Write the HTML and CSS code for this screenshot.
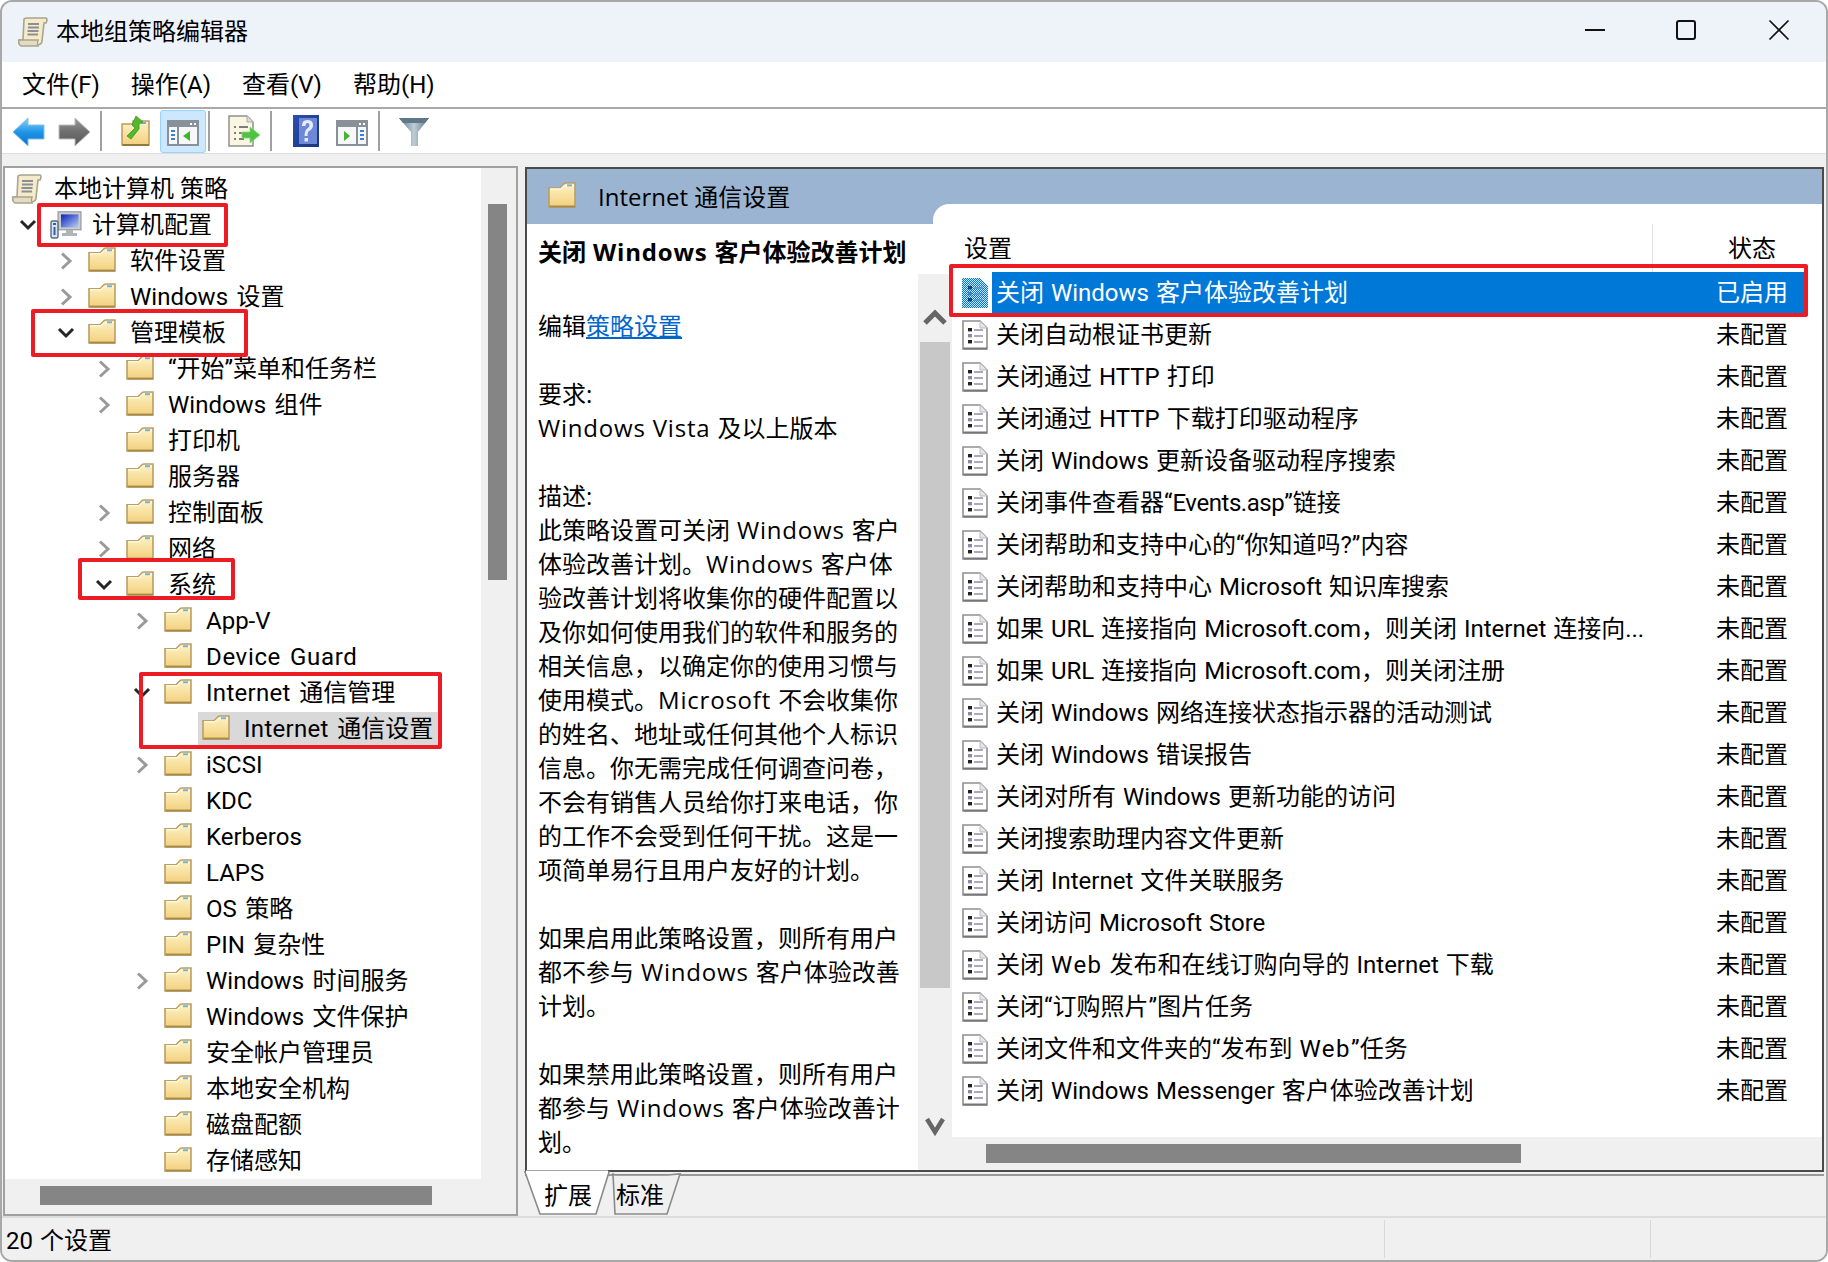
FILE: index.html
```html
<!DOCTYPE html>
<html lang="zh-CN">
<head>
<meta charset="utf-8">
<title>本地组策略编辑器</title>
<link rel="stylesheet" href="styles.css">
</head>
<body>
<svg class="defs" xmlns="http://www.w3.org/2000/svg">
  <defs>
    <linearGradient id="gf" x1="0" y1="0" x2="0" y2="1"><stop offset="0" stop-color="#fdf3c8"/><stop offset="1" stop-color="#f3d07c"/></linearGradient>
    <linearGradient id="gb" x1="0" y1="0" x2="0" y2="1"><stop offset="0" stop-color="#8fd0f8"/><stop offset=".5" stop-color="#1e96e8"/><stop offset="1" stop-color="#0f6cc8"/></linearGradient>
    <linearGradient id="gg" x1="0" y1="0" x2="0" y2="1"><stop offset="0" stop-color="#9a9a9a"/><stop offset=".5" stop-color="#6e6e6e"/><stop offset="1" stop-color="#5a5a5a"/></linearGradient>
    <linearGradient id="gs" x1="0" y1="0" x2="1" y2="1"><stop offset="0" stop-color="#0a1fb8"/><stop offset="1" stop-color="#b8d0f5"/></linearGradient>
    <linearGradient id="gh" x1="0" y1="0" x2="1" y2="1"><stop offset="0" stop-color="#2a4fb0"/><stop offset="1" stop-color="#1a357f"/></linearGradient>
    <linearGradient id="gt" x1="0" y1="0" x2="1" y2="0"><stop offset="0" stop-color="#5f7888"/><stop offset=".5" stop-color="#bccdd6"/><stop offset="1" stop-color="#5a7080"/></linearGradient>
    <pattern id="dither" width="2" height="2" patternUnits="userSpaceOnUse"><rect width="2" height="2" fill="#0078d7"/><rect width="1" height="1" fill="#cfe4f5"/><rect x="1" y="1" width="1" height="1" fill="#cfe4f5"/></pattern>
  </defs>
  <symbol id="folder" viewBox="0 0 28 26" preserveAspectRatio="none">
    <path d="M1 6 L12 6 L15 3 Q16 1 18 1 H27 V25 H1Z" fill="url(#gf)" stroke="#bb9f63" stroke-width="1.6"/>
    <path d="M1.5 24.5 H27" stroke="#a5894d" stroke-width="2"/>
    <path d="M2 7 H13 L16 4 H26" fill="none" stroke="#fff8dc" stroke-width="1.4"/>
    <rect x="19" y="2.4" width="5" height="2" fill="#6ab1e8"/>
  </symbol>
  <symbol id="scroll" viewBox="0 0 30 30">
    <path d="M6 2 Q7 1 10 1 H28 Q30 2 28 6 H26 L24 24 Q24 27 20 28 H3 Q0 27 1 23 H5Z" fill="#f5ebc8" stroke="#a8a48f" stroke-width="1.6"/>
    <path d="M1 23 H20 Q19 27 20 29 H3 Q0 27 1 23Z" fill="#e4dcc0" stroke="#a8a48f" stroke-width="1.4"/>
    <path d="M10 7 H21 M10 10.500 H21 M9.500 14 H20.500 M9.500 17.500 H20" stroke="#8b8f98" stroke-width="2"/>
  </symbol>
  <symbol id="computer" viewBox="0 0 32 28">
    <rect x="8" y="0.8" width="23" height="18" fill="#c8ccd0" stroke="#8a8e92"/>
    <rect x="11" y="3.4" width="17.5" height="13" fill="url(#gs)"/>
    <path d="M16 19 H23 V22 H27 V25 H12 V22 H16Z" fill="#b0b4b8"/>
    <rect x="1" y="10" width="7" height="17" rx="1.5" fill="#d8e4f0" stroke="#5a6a80" stroke-width="1.4"/>
    <path d="M3 13 H6 M4.5 16 V24" stroke="#3560a8" stroke-width="2"/>
  </symbol>
  <symbol id="doc" viewBox="0 0 26 30">
    <path d="M1 1 H18 L25 8 V29 H1Z" fill="#fff" stroke="#8f8f8f" stroke-width="1.6"/>
    <path d="M18 1 V8 H25" fill="#e6e6e6" stroke="#bbb" stroke-width="1"/>
    <path d="M1.5 28.5 H25" stroke="#777" stroke-width="2"/>
    <rect x="6" y="8" width="4" height="3.4" fill="#222"/><rect x="6" y="14" width="4" height="3.4" fill="#8a88b0"/><rect x="6" y="20" width="4" height="3.4" fill="#222"/>
    <path d="M12 10 H21 M12 16 H21 M12 22 H21" stroke="#8e8ea6" stroke-width="1.6"/>
  </symbol>
  <symbol id="docsel" viewBox="0 0 26 30">
    <path d="M0 0 H18 L26 8 V30 H0Z" fill="url(#dither)"/>
    <rect x="6" y="8" width="4" height="3.4" fill="#17406b"/><rect x="6" y="14" width="4" height="3.4" fill="#4a7fb5"/><rect x="6" y="20" width="4" height="3.4" fill="#17406b"/>
    <path d="M12 10 H21 M12 16 H21 M12 22 H21" stroke="#5a93c8" stroke-width="1.4"/>
  </symbol>
  <symbol id="chev-r" viewBox="0 0 16 20"><path d="M4 2.5 L12 10 L4 17.5" fill="none" stroke="#9a9a9a" stroke-width="3"/></symbol>
  <symbol id="chev-d" viewBox="0 0 18 12"><path d="M2 2 L9 9 L16 2" fill="none" stroke="#262626" stroke-width="3"/></symbol>
  <symbol id="back" viewBox="0 0 33 30"><path d="M1 15 L16 1 V8 H32 V22 H16 V29Z" fill="url(#gb)" stroke="#7fc0ee" stroke-width="1"/></symbol>
  <symbol id="forward" viewBox="0 0 33 30"><path d="M32 15 L17 1 V8 H1 V22 H17 V29Z" fill="url(#gg)" stroke="#bdbdbd" stroke-width="1"/></symbol>
  <symbol id="upfolder" viewBox="0 0 30 32">
    <path d="M1 9 H12 V6 H28 V30 H1Z" fill="url(#gf)" stroke="#b89c5e" stroke-width="1.5"/>
    <path d="M1.5 30 H28" stroke="#94793f" stroke-width="2"/>
    <rect x="20" y="7" width="5" height="2" fill="#6ab1e8"/>
    <path d="M6 21 L14 13 L11 10 L15 1 L22 7 L18 9 L18 14 L10 24Z" fill="#54b82c" stroke="#3a9a1e" stroke-width=".8"/>
  </symbol>
  <symbol id="panel-left" viewBox="0 0 32 26">
    <rect x="1" y="1" width="30" height="24" fill="#f6f7f8" stroke="#8a9098" stroke-width="2"/>
    <rect x="1" y="1" width="30" height="6" fill="#8a9098"/>
    <rect x="23" y="3" width="2" height="2" fill="#fff"/><rect x="27" y="3" width="2" height="2" fill="#fff"/>
    <path d="M11 7 V25" stroke="#8a9098" stroke-width="2"/>
    <path d="M4 11 H8 M4 15 H8 M4 19 H8" stroke="#3d7fd0" stroke-width="2"/>
    <path d="M23 11 V21 L16 16Z" fill="#3fb52e"/>
  </symbol>
  <symbol id="panel-right" viewBox="0 0 32 26">
    <rect x="1" y="1" width="30" height="24" fill="#f6f7f8" stroke="#8a9098" stroke-width="2"/>
    <rect x="1" y="1" width="30" height="6" fill="#8a9098"/>
    <rect x="23" y="3" width="2" height="2" fill="#fff"/><rect x="27" y="3" width="2" height="2" fill="#fff"/>
    <path d="M21 7 V25" stroke="#8a9098" stroke-width="2"/>
    <path d="M24 11 H28 M24 15 H28 M24 19 H28" stroke="#3d7fd0" stroke-width="2"/>
    <path d="M8 11 V21 L14 16Z" fill="#3fb52e"/>
  </symbol>
  <symbol id="export" viewBox="0 0 32 32">
    <path d="M1 1 H19 L25 7 V31 H1Z" fill="#fbf6e2" stroke="#8f8f8f" stroke-width="1.5"/>
    <path d="M19 1 V7 H25" fill="#ddd" stroke="#aaa"/>
    <path d="M6 12 H8 M11 12 H20 M6 18 H8 M11 18 H16 M6 24 H8 M11 24 H16" stroke="#555" stroke-width="1.6"/>
    <path d="M14 17 H22 V12 L32 20 L22 28 V23 H14Z" fill="#4fc244" stroke="#8ddb80" stroke-width=".8"/>
  </symbol>
  <symbol id="help" viewBox="0 0 26 32">
    <rect width="26" height="32" fill="url(#gh)"/>
    <rect x="6" y="3" width="18" height="26" fill="#6d88d8"/>
    <path d="M9 11 Q9 5 14 5 Q20 5 20 10 Q20 14 16 16 Q14.500 17 14.500 21 H11.500 Q11.500 15 15 13 Q16.500 12 16.500 10 Q16.500 8 14.500 8 Q12.500 8 12.500 11Z" fill="#e8ecf8"/>
    <rect x="11.500" y="23" width="3.500" height="3.500" fill="#e8ecf8"/>
  </symbol>
  <symbol id="funnel" viewBox="0 0 30 30">
    <path d="M0 1 H30 L19 15 V29 H12 V15Z" fill="url(#gt)"/>
    <path d="M0 1 H30 L26 6 H4Z" fill="#5f7888"/>
  </symbol>
</svg>

<div class="window">
  <header class="titlebar">
    <svg class="ti-icon"><use href="#scroll"/></svg>
    <span class="ti-text">本地组策略编辑器</span>
    <div class="controls">
      <svg class="ctl" viewBox="0 0 20 20"><path d="M0 10 H20" stroke="#111" stroke-width="2"/></svg>
      <svg class="ctl ctl-max" viewBox="0 0 20 20"><rect x="1" y="1" width="18" height="18" rx="2" fill="none" stroke="#111" stroke-width="2"/></svg>
      <svg class="ctl ctl-close" viewBox="0 0 20 20"><path d="M0.500 0.500 L19.500 19.500 M19.500 0.500 L0.500 19.500" stroke="#111" stroke-width="1.700"/></svg>
    </div>
  </header>

  <nav class="menubar">
    <span class="menu-item">文件(F)</span>
    <span class="menu-item">操作(A)</span>
    <span class="menu-item">查看(V)</span>
    <span class="menu-item">帮助(H)</span>
  </nav>

  <div class="toolbar">
    <span class="tb"><svg class="i-arrow"><use href="#back"/></svg></span>
    <span class="tb"><svg class="i-arrow"><use href="#forward"/></svg></span>
    <span class="sep"></span>
    <span class="tb"><svg class="i-up"><use href="#upfolder"/></svg></span>
    <span class="tb tb-on"><svg class="i-panel"><use href="#panel-left"/></svg></span>
    <span class="sep sep-tight"></span>
    <span class="tb"><svg class="i-export"><use href="#export"/></svg></span>
    <span class="sep"></span>
    <span class="tb"><svg class="i-help"><use href="#help"/></svg></span>
    <span class="tb"><svg class="i-panel"><use href="#panel-right"/></svg></span>
    <span class="sep"></span>
    <span class="tb"><svg class="i-funnel"><use href="#funnel"/></svg></span>
  </div>

  <main class="main">
    <section class="left-pane">
      <div class="tree">
        <div class="row lv0"><svg class="i-scroll"><use href="#scroll"/></svg><span>本地计算机 策略</span></div>
        <div class="row lv1"><svg class="tw tw-open"><use href="#chev-d"/></svg><svg class="i-comp"><use href="#computer"/></svg><span>计算机配置</span></div>
        <div class="row lv2"><svg class="tw"><use href="#chev-r"/></svg><svg class="fd"><use href="#folder"/></svg><span>软件设置</span></div>
        <div class="row lv2"><svg class="tw"><use href="#chev-r"/></svg><svg class="fd"><use href="#folder"/></svg><span>Windows 设置</span></div>
        <div class="row lv2"><svg class="tw tw-open"><use href="#chev-d"/></svg><svg class="fd"><use href="#folder"/></svg><span>管理模板</span></div>
        <div class="row lv3"><svg class="tw"><use href="#chev-r"/></svg><svg class="fd"><use href="#folder"/></svg><span>“开始”菜单和任务栏</span></div>
        <div class="row lv3"><svg class="tw"><use href="#chev-r"/></svg><svg class="fd"><use href="#folder"/></svg><span>Windows 组件</span></div>
        <div class="row lv3"><i class="tw"></i><svg class="fd"><use href="#folder"/></svg><span>打印机</span></div>
        <div class="row lv3"><i class="tw"></i><svg class="fd"><use href="#folder"/></svg><span>服务器</span></div>
        <div class="row lv3"><svg class="tw"><use href="#chev-r"/></svg><svg class="fd"><use href="#folder"/></svg><span>控制面板</span></div>
        <div class="row lv3"><svg class="tw"><use href="#chev-r"/></svg><svg class="fd"><use href="#folder"/></svg><span>网络</span></div>
        <div class="row lv3"><svg class="tw tw-open"><use href="#chev-d"/></svg><svg class="fd"><use href="#folder"/></svg><span>系统</span></div>
        <div class="row lv4"><svg class="tw"><use href="#chev-r"/></svg><svg class="fd"><use href="#folder"/></svg><span>App-V</span></div>
        <div class="row lv4"><i class="tw"></i><svg class="fd"><use href="#folder"/></svg><span class="wide">Device Guard</span></div>
        <div class="row lv4"><svg class="tw tw-open"><use href="#chev-d"/></svg><svg class="fd"><use href="#folder"/></svg><span><b class="wide-s">Internet</b> 通信管理</span></div>
        <div class="row lv5"><i class="tw"></i><div class="row-sel"><svg class="fd"><use href="#folder"/></svg><span><b class="wide-s">Internet</b> 通信设置</span></div></div>
        <div class="row lv4"><svg class="tw"><use href="#chev-r"/></svg><svg class="fd"><use href="#folder"/></svg><span>iSCSI</span></div>
        <div class="row lv4"><i class="tw"></i><svg class="fd"><use href="#folder"/></svg><span>KDC</span></div>
        <div class="row lv4"><i class="tw"></i><svg class="fd"><use href="#folder"/></svg><span>Kerberos</span></div>
        <div class="row lv4"><i class="tw"></i><svg class="fd"><use href="#folder"/></svg><span>LAPS</span></div>
        <div class="row lv4"><i class="tw"></i><svg class="fd"><use href="#folder"/></svg><span>OS 策略</span></div>
        <div class="row lv4"><i class="tw"></i><svg class="fd"><use href="#folder"/></svg><span>PIN 复杂性</span></div>
        <div class="row lv4"><svg class="tw"><use href="#chev-r"/></svg><svg class="fd"><use href="#folder"/></svg><span>Windows 时间服务</span></div>
        <div class="row lv4"><i class="tw"></i><svg class="fd"><use href="#folder"/></svg><span>Windows 文件保护</span></div>
        <div class="row lv4"><i class="tw"></i><svg class="fd"><use href="#folder"/></svg><span>安全帐户管理员</span></div>
        <div class="row lv4"><i class="tw"></i><svg class="fd"><use href="#folder"/></svg><span>本地安全机构</span></div>
        <div class="row lv4"><i class="tw"></i><svg class="fd"><use href="#folder"/></svg><span>磁盘配额</span></div>
        <div class="row lv4"><i class="tw"></i><svg class="fd"><use href="#folder"/></svg><span>存储感知</span></div>
      </div>
      <div class="tree-vs"><div class="tree-vthumb"></div></div>
      <div class="tree-hs"><div class="tree-hthumb"></div></div>
    </section>

    <section class="right-col">
      <div class="detail">
        <div class="band"><svg class="band-fd"><use href="#folder"/></svg><span class="band-title">Internet 通信设置</span></div>
        <div class="split">
          <article class="desc">
            <h1 class="desc-title">关闭<b class="lat"> Windows </b>客户体验改善计划</h1>
            <p>编辑<a class="link" href="#">策略设置</a></p>
            <p>要求:<br><b class="lat">Windows Vista </b>及以上版本</p>
            <p>描述:<br>此策略设置可关闭<b class="lat"> Windows </b>客户<br>体验改善计划。<b class="lat">Windows </b>客户体<br>验改善计划将收集你的硬件配置以<br>及你如何使用我们的软件和服务的<br>相关信息，以确定你的使用习惯与<br>使用模式。<b class="lat">Microsoft </b>不会收集你<br>的姓名、地址或任何其他个人标识<br>信息。你无需完成任何调查问卷，<br>不会有销售人员给你打来电话，你<br>的工作不会受到任何干扰。这是一<br>项简单易行且用户友好的计划。</p>
            <p>如果启用此策略设置，则所有用户<br>都不参与<b class="lat"> Windows </b>客户体验改善<br>计划。</p>
            <p>如果禁用此策略设置，则所有用户<br>都参与<b class="lat"> Windows </b>客户体验改善计<br>划。</p>
          </article>
          <div class="vs">
            <svg class="vs-up" viewBox="0 0 24 16"><path d="M2 14 L12 4 L22 14" fill="none" stroke="#666" stroke-width="5"/></svg>
            <div class="vs-thumb"></div>
            <svg class="vs-down" viewBox="0 0 20 20"><path d="M2 2 L10 15 L18 2" fill="none" stroke="#666" stroke-width="4.500"/></svg>
          </div>
          <div class="list-col">
            <div class="list-head"><span class="h-name">设置</span><span class="h-state">状态</span></div>
            <div class="list-body">
              <div class="item"><svg class="doc"><use href="#docsel"/></svg><div class="item-in item-on"><span class="name">关闭 Windows 客户体验改善计划</span><span class="state">已启用</span></div></div>
              <div class="item"><svg class="doc"><use href="#doc"/></svg><div class="item-in"><span class="name">关闭自动根证书更新</span><span class="state">未配置</span></div></div>
              <div class="item"><svg class="doc"><use href="#doc"/></svg><div class="item-in"><span class="name">关闭通过 HTTP 打印</span><span class="state">未配置</span></div></div>
              <div class="item"><svg class="doc"><use href="#doc"/></svg><div class="item-in"><span class="name">关闭通过 HTTP 下载打印驱动程序</span><span class="state">未配置</span></div></div>
              <div class="item"><svg class="doc"><use href="#doc"/></svg><div class="item-in"><span class="name">关闭 Windows 更新设备驱动程序搜索</span><span class="state">未配置</span></div></div>
              <div class="item"><svg class="doc"><use href="#doc"/></svg><div class="item-in"><span class="name">关闭事件查看器“<b class="tight">Events.asp</b>”链接</span><span class="state">未配置</span></div></div>
              <div class="item"><svg class="doc"><use href="#doc"/></svg><div class="item-in"><span class="name">关闭帮助和支持中心的“你知道吗?”内容</span><span class="state">未配置</span></div></div>
              <div class="item"><svg class="doc"><use href="#doc"/></svg><div class="item-in"><span class="name">关闭帮助和支持中心 Microsoft 知识库搜索</span><span class="state">未配置</span></div></div>
              <div class="item"><svg class="doc"><use href="#doc"/></svg><div class="item-in"><span class="name">如果 URL 连接指向 Microsoft.com，则关闭 Internet 连接向...</span><span class="state">未配置</span></div></div>
              <div class="item"><svg class="doc"><use href="#doc"/></svg><div class="item-in"><span class="name">如果 URL 连接指向 Microsoft.com，则关闭注册</span><span class="state">未配置</span></div></div>
              <div class="item"><svg class="doc"><use href="#doc"/></svg><div class="item-in"><span class="name">关闭 Windows 网络连接状态指示器的活动测试</span><span class="state">未配置</span></div></div>
              <div class="item"><svg class="doc"><use href="#doc"/></svg><div class="item-in"><span class="name">关闭 Windows 错误报告</span><span class="state">未配置</span></div></div>
              <div class="item"><svg class="doc"><use href="#doc"/></svg><div class="item-in"><span class="name">关闭对所有 Windows 更新功能的访问</span><span class="state">未配置</span></div></div>
              <div class="item"><svg class="doc"><use href="#doc"/></svg><div class="item-in"><span class="name">关闭搜索助理内容文件更新</span><span class="state">未配置</span></div></div>
              <div class="item"><svg class="doc"><use href="#doc"/></svg><div class="item-in"><span class="name">关闭 Internet 文件关联服务</span><span class="state">未配置</span></div></div>
              <div class="item"><svg class="doc"><use href="#doc"/></svg><div class="item-in"><span class="name">关闭访问 Microsoft Store</span><span class="state">未配置</span></div></div>
              <div class="item"><svg class="doc"><use href="#doc"/></svg><div class="item-in"><span class="name">关闭 <b class="web">Web</b> 发布和在线订购向导的 Internet 下载</span><span class="state">未配置</span></div></div>
              <div class="item"><svg class="doc"><use href="#doc"/></svg><div class="item-in"><span class="name">关闭“订购照片”图片任务</span><span class="state">未配置</span></div></div>
              <div class="item"><svg class="doc"><use href="#doc"/></svg><div class="item-in"><span class="name">关闭文件和文件夹的“发布到 <b class="web">Web</b>”任务</span><span class="state">未配置</span></div></div>
              <div class="item"><svg class="doc"><use href="#doc"/></svg><div class="item-in"><span class="name">关闭 Windows Messenger 客户体验改善计划</span><span class="state">未配置</span></div></div>
            </div>
            <div class="list-hs"><div class="list-hthumb"></div></div>
          </div>
        </div>
      </div>
      <div class="tabs">
        <svg class="tab-shapes" viewBox="0 0 170 44">
          <path d="M88 2 L90 3 L142 3 L155 2 L142 42 H90Z" fill="#f0f0f0" stroke="#8a8a8a" stroke-width="1.600"/>
          <path d="M0 0 L15 42 H71 L84 0Z" fill="#fff" stroke="#8a8a8a" stroke-width="1.600"/>
          <path d="M1 0 H83" stroke="#fff" stroke-width="3"/>
        </svg>
        <span class="tab-label tab-first">扩展</span>
        <span class="tab-label">标准</span>
      </div>
    </section>
  </main>

  <footer class="status">
    <span class="st-cell st-main">20 个设置</span>
    <span class="st-cell st-mid"></span>
    <span class="st-cell st-end"></span>
  </footer>

  <div class="mark mark-a"></div>
  <div class="mark mark-b"></div>
  <div class="mark mark-c"></div>
  <div class="mark mark-d"></div>
  <div class="mark mark-e"></div>
</div>
</body>
</html>
```

FILE: styles.css
```css
* { box-sizing: border-box; }
html, body { margin: 0; padding: 0; background: #fff; }
body {
  width: 1828px;
  height: 1262px;
  overflow: hidden;
  font-family: Roboto, "Noto Sans CJK SC", sans-serif;
  font-size: 24px;
  line-height: 34px;
  color: #000;
}
b { font-weight: inherit; }
.defs { display: block; width: 0; height: 0; }

.window {
  position: relative;
  width: 1828px;
  height: 1262px;
  display: flex;
  flex-direction: column;
  border: 2px solid #a8a8a8;
  border-radius: 12px;
  overflow: hidden;
  background: #f0f0f0;
}

/* title bar */
.titlebar {
  height: 60px;
  flex: none;
  display: flex;
  align-items: center;
  background: #eef3fa;
  padding-left: 16px;
}
.ti-icon { width: 30px; height: 30px; margin-right: 8px; }
.ti-text { flex: 1; }
.controls { display: flex; align-items: center; padding-bottom: 4px; }
.ctl { width: 20px; height: 20px; margin-right: 71px; overflow: visible; }
.ctl-max { margin-right: 73px; }
.ctl-close { margin-right: 37px; }

/* menu bar */
.menubar {
  height: 47px;
  flex: none;
  display: flex;
  align-items: center;
  background: #fff;
  border-bottom: 2px solid #a9a9a9;
  padding-left: 20px;
  gap: 31px;
}

/* toolbar */
.toolbar {
  height: 45px;
  flex: none;
  display: flex;
  align-items: center;
  background: #fff;
  border-bottom: 1px solid #dcdcdc;
  padding-left: 3px;
}
.tb {
  width: 46px;
  height: 43px;
  display: flex;
  align-items: center;
  justify-content: center;
  border: 1px solid transparent;
}
.tb-on {
  background: #cce8ff;
  border-color: #99d1ff;
  border-radius: 3px;
  margin-left: 1px;
}
.sep { width: 2px; height: 40px; background: #a0a0a0; margin: 0 11px 0 3px; }
.sep-tight { margin-left: 2px; }
.i-arrow { width: 33px; height: 30px; margin-top: 2px; }
.i-up { width: 30px; height: 32px; }
.i-panel { width: 32px; height: 26px; margin-top: 3px; }
.i-export { width: 32px; height: 32px; }
.i-help { width: 26px; height: 32px; }
.i-funnel { width: 30px; height: 30px; margin-top: 2px; }

/* main */
.main {
  flex: 1;
  min-height: 0;
  display: flex;
  align-items: flex-start;
  padding: 12px 0 0 1px;
  background: #f0f0f0;
}

/* left pane */
.left-pane {
  width: 515px;
  height: 1050px;
  margin-right: 7px;
  flex: none;
  display: grid;
  grid-template-columns: 476px 1fr;
  grid-template-rows: 1011px 1fr;
  border: 2px solid #a0a0a0;
  background: #f0f0f0;
}
.tree { background: #fff; padding-top: 3px; overflow: hidden; }
.row { height: 36px; display: flex; align-items: center; white-space: nowrap; word-spacing: 2.500px; }
.lv0 { padding-left: 7px; word-spacing: 0; }
.lv1 { padding-left: 15px; }
.lv2 { padding-left: 53px; }
.lv3 { padding-left: 91px; }
.lv4 { padding-left: 129px; }
.lv5 { padding-left: 167px; }
.tw { display: block; width: 16px; height: 20px; margin-right: 14px; flex: none; }
.tw-open { height: 12px; width: 18px; margin-left: -1px; margin-right: 13px; }
.fd { width: 28px; height: 25px; flex: none; margin: -3px 14px 0 0; }
.i-scroll { width: 30px; height: 30px; margin-right: 12px; flex: none; }
.i-comp { width: 32px; height: 28px; margin-right: 10px; flex: none; }
.wide { letter-spacing: .65px; }
.wide-s { letter-spacing: .3px; }
.row-sel {
  display: flex;
  align-items: center;
  height: 35px;
  width: 240px;
  margin-left: -4px;
  padding-left: 4px;
  background: #d9d9d9;
}
.tree-vs { background: #f0f0f0; padding: 36px 0 0 7px; }
.tree-vthumb { width: 19px; height: 376px; background: #858585; }
.tree-hs { grid-column: 1 / 3; padding: 7px 0 0 35px; }
.tree-hthumb { width: 392px; height: 19px; background: #858585; }

/* right column */
.right-col {
  width: 1299px;
  height: 1050px;
  flex: none;
  margin-top: 1px;
  display: flex;
  flex-direction: column;
}
.detail {
  height: 1005px;
  flex: none;
  border: 2px solid #4a4a4a;
  background: #fff;
  display: flex;
  flex-direction: column;
}
.band {
  height: 55px;
  flex: none;
  display: flex;
  align-items: flex-start;
  padding: 13px 0 0 21px;
  background: #9ab4d1;
}
.band-fd { width: 28px; height: 26px; flex: none; margin-right: 22px; }
.band-title { font-family: "Open Sans", "Noto Sans CJK SC", sans-serif; line-height: 30px; }
.split { flex: 1; min-height: 0; display: flex; }

.desc {
  width: 391px;
  flex: none;
  padding: 11px 0 0 11px;
  overflow: hidden;
  white-space: nowrap;
  font-family: "Open Sans", "Noto Sans CJK SC", sans-serif;
}
.lat { letter-spacing: .8px; }
.desc-title { margin: 0 0 40px; font-size: 24px; font-weight: 700; line-height: 34px; }
.desc p { margin: 0 0 34px; }
.link { color: #0066cc; text-decoration: underline; }

.vs {
  width: 34px;
  flex: none;
  margin-top: 50px;
  background: #f0f0f0;
  display: flex;
  flex-direction: column;
  align-items: center;
}
.vs-up { width: 24px; height: 16px; margin-top: 35px; margin-bottom: 17px; flex: none; }
.vs-thumb { width: 30px; height: 646px; background: #c8c8c8; flex: none; }
.vs-down { width: 20px; height: 20px; margin-top: 129px; flex: none; }

.list-col { flex: 1; min-width: 0; display: flex; flex-direction: column; }
.list-head {
  position: relative;
  height: 68px;
  flex: none;
  margin: -20px 0 0 -19px;
  padding-top: 20px;
  display: flex;
  background: #fff;
  border-top-left-radius: 16px;
}
.h-name {
  width: 720px;
  padding-left: 31px;
  line-height: 50px;
  border-right: 1px solid #e2e2e2;
}
.h-state { padding-left: 75px; line-height: 50px; }
.list-body { height: 865px; flex: none; background: #fff; }
.item { height: 42px; display: flex; align-items: center; padding-left: 10px; }
.doc { width: 26px; height: 30px; flex: none; margin-right: 4px; }
.item-in {
  width: 816px;
  height: 42px;
  display: flex;
  align-items: center;
  padding-left: 4px;
  white-space: nowrap;
  word-spacing: 1px;
}
.item-on { background: #0078d7; color: #fff; }
.name { width: 720px; flex: none; }
.state { flex: none; }
.tight { letter-spacing: -.45px; }
.web { letter-spacing: 1.500px; }
.list-hs { flex: 1; padding: 7px 0 0 34px; background: #f0f0f0; }
.list-hthumb { width: 535px; height: 19px; background: #858585; }

/* tabs */
.tabs {
  position: relative;
  flex: 1;
  display: flex;
  align-items: center;
  padding: 0 0 2px 19px;
  border-top: 2px solid #999;
  margin-top: 2px;
}
.tab-shapes { position: absolute; left: 0; top: -4px; width: 170px; height: 44px; overflow: visible; }
.tab-label { position: relative; }
.tab-first { margin-right: 24px; }

/* status bar */
.status {
  height: 44px;
  flex: none;
  display: flex;
  align-items: center;
  border-top: 2px solid #dcdcdc;
  background: #f0f0f0;
  position: relative;
}
.st-cell { height: 38px; line-height: 42px; }
.st-main { width: 1383px; padding-left: 4px; border-right: 1px solid #d8d8d8; word-spacing: 1px; }
.st-mid { width: 266px; border-right: 1px solid #d8d8d8; }
.st-end { flex: 1; }

/* red annotation frames */
.mark {
  position: absolute;
  border: 4px solid #ed1c24;
  border-radius: 2px;
  pointer-events: none;
}
.mark-a { left: 35px; top: 201px; width: 191px; height: 44px; }
.mark-b { left: 29px; top: 307px; width: 217px; height: 48px; }
.mark-c { left: 76px; top: 556px; width: 157px; height: 42px; }
.mark-d { left: 137px; top: 670px; width: 303px; height: 77px; }
.mark-e { left: 947px; top: 262px; width: 859px; height: 53px; }
```
